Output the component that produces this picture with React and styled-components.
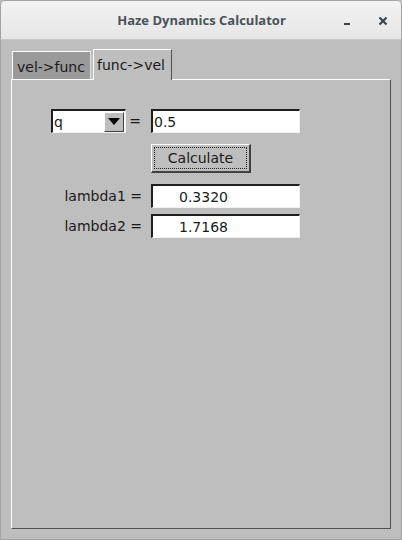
import React, { useState } from 'react';
import styled, { createGlobalStyle } from 'styled-components';

const Global = createGlobalStyle`
  html, body {
    margin: 0;
    padding: 0;
    background: #bebebe;
  }
  * {
    box-sizing: border-box;
  }
`;

const Window = styled.div`
  width: 402px;
  height: 540px;
  display: flex;
  flex-direction: column;
  border: 1px solid #a3a3a3;
  border-top-left-radius: 5px;
  border-top-right-radius: 5px;
  overflow: hidden;
  background: #bebebe;
  font-family: 'DejaVu Sans', sans-serif;
  font-size: 14px;
  color: #1a1a1a;
`;

const TitleBar = styled.div`
  height: 39px;
  flex: none;
  display: flex;
  align-items: center;
  position: relative;
  background: linear-gradient(#f2f2f2, #e6e6e6);
  border-bottom: 1px solid #c9c9c9;
`;

const Title = styled.div`
  flex: 1;
  text-align: center;
  font-family: 'Open Sans', sans-serif;
  font-weight: 700;
  font-size: 13px;
  color: #4a5358;
  padding-left: 1px;
`;

const TitleButton = styled.span`
  position: absolute;
  top: 0;
  height: 39px;
  display: flex;
  align-items: center;
  justify-content: center;
  width: 20px;
  left: ${(p) => p.$left}px;
`;

const Body = styled.div`
  flex: 1;
  display: flex;
  flex-direction: column;
  padding: 9px 10px 10px 10px;
`;

const TabRow = styled.div`
  display: flex;
  align-items: flex-end;
  gap: 2px;
  margin-left: 1px;
  position: relative;
  z-index: 1;
`;

const Tab = styled.div`
  height: ${(p) => (p.$active ? 31 : 28)}px;
  padding: 0 ${(p) => (p.$active ? 3 : 4)}px;
  display: flex;
  align-items: ${(p) => (p.$active ? 'flex-start' : 'center')};
  padding-top: ${(p) => (p.$active ? 7 : 2)}px;
  background: ${(p) => (p.$active ? '#bebebe' : '#9a9a9a')};
  border-top: 1px solid #ffffff;
  border-left: 1px solid #ffffff;
  border-right: 1px solid ${(p) => (p.$active ? '#505050' : '#e0e0e0')};
  margin-bottom: ${(p) => (p.$active ? -1 : 0)}px;
  width: ${(p) => p.$w}px;
  white-space: nowrap;
  cursor: pointer;
`;

const Panel = styled.div`
  flex: 1;
  border-top: 1px solid #ffffff;
  border-left: 1px solid #ffffff;
  border-right: 1px solid #505050;
  border-bottom: 1px solid #505050;
  padding: 29px 0 0 39px;
`;

const Form = styled.div`
  display: grid;
  grid-template-columns: 91px 149px;
  column-gap: 9px;
  align-items: center;
`;

const Cell = styled.div`
  display: flex;
  align-items: center;
  justify-content: ${(p) => (p.$right ? 'flex-end' : 'space-between')};
  margin-top: ${(p) => p.$mt || 0}px;
`;

const Combo = styled.div`
  width: 75px;
  height: 24px;
  background: #ffffff;
  border-style: solid;
  border-width: 2px 1px 1px 2px;
  border-color: #1e1e1e #f0f0f0 #f0f0f0 #1e1e1e;
  display: flex;
  align-items: center;
  justify-content: space-between;
  padding: 0 1px 0 1px;
`;

const ArrowButton = styled.div`
  width: 20px;
  height: 20px;
  background: #bebebe;
  border-style: solid;
  border-width: 1px;
  border-color: #ffffff #404040 #404040 #ffffff;
  display: flex;
  align-items: center;
  justify-content: center;
`;

const Equals = styled.span`
  padding-right: 1px;
`;

const Entry = styled.div`
  width: 149px;
  height: 24px;
  background: #ffffff;
  border-style: solid;
  border-width: 2px 1px 1px 2px;
  border-color: #1e1e1e #f0f0f0 #f0f0f0 #1e1e1e;
  display: flex;
  align-items: center;
  padding-left: ${(p) => p.$indent || 0}px;
  margin-top: ${(p) => p.$mt || 0}px;
`;

const Button = styled.button`
  width: 100px;
  height: 29px;
  margin-top: 11px;
  background: #bebebe;
  border-style: solid;
  border-width: 1px 2px 2px 1px;
  border-color: #ffffff #404040 #404040 #ffffff;
  padding: 2px;
  font: inherit;
  color: inherit;
  cursor: pointer;
`;

const Focus = styled.div`
  width: 100%;
  height: 100%;
  border: 1px dotted #222;
  display: flex;
  align-items: center;
  justify-content: center;
`;

function App() {
  const [tab, setTab] = useState(1);
  const [q] = useState('0.5');

  return (
    <>
      <Global />
      <Window>
        <TitleBar>
          <Title>Haze Dynamics Calculator</Title>
          <TitleButton $left={336}>
            <svg width="10" height="10" viewBox="0 0 10 10">
              <rect x="2" y="7" width="6" height="2" fill="#3c4448" />
            </svg>
          </TitleButton>
          <TitleButton $left={372}>
            <svg width="10" height="10" viewBox="0 0 10 10">
              <path d="M1.5 1.5 L8.5 8.5 M8.5 1.5 L1.5 8.5" stroke="#3c4448" strokeWidth="2.2" />
            </svg>
          </TitleButton>
        </TitleBar>
        <Body>
          <TabRow>
            <Tab $active={tab === 0} $w={79} onClick={() => setTab(0)}>vel-&gt;func</Tab>
            <Tab $active={tab === 1} $w={79} onClick={() => setTab(1)}>func-&gt;vel</Tab>
          </TabRow>
          <Panel>
            <Form>
              <Cell>
                <Combo>
                  <span>q</span>
                  <ArrowButton>
                    <svg width="12" height="7" viewBox="0 0 12 7">
                      <path d="M0 0 H12 L6 7 Z" fill="#000" />
                    </svg>
                  </ArrowButton>
                </Combo>
                <Equals>=</Equals>
              </Cell>
              <Entry $indent={1}>{q}</Entry>

              <div />
              <div>
                <Button>
                  <Focus>Calculate</Focus>
                </Button>
              </div>

              <Cell $right $mt={11}>
                <span>lambda1 =</span>
              </Cell>
              <Entry $indent={26} $mt={11}>0.3320</Entry>

              <Cell $right $mt={6}>
                <span>lambda2 =</span>
              </Cell>
              <Entry $indent={26} $mt={6}>1.7168</Entry>
            </Form>
          </Panel>
        </Body>
      </Window>
    </>
  );
}

export default App;
